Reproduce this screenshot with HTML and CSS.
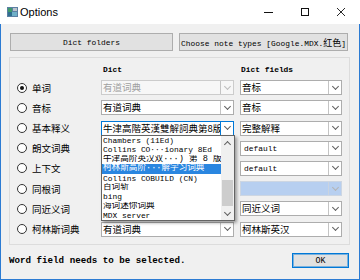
FILE: index.html
```html
<!DOCTYPE html>
<html lang="zh-CN">
<head>
  <meta charset="UTF-8">
  <title>Options</title>
  <link rel="stylesheet" href="styles.css">
</head>
<body>
  <div class="window">
    <!-- title bar -->
    <div class="titlebar">
      <svg class="app-icon" width="11" height="10" viewBox="0 0 11 10">
        <rect width="11" height="10" fill="#5b7fa3"/>
        <rect x="1" y="1" width="4" height="4" fill="#3f9a6a"/>
        <rect x="1" y="5" width="4" height="4" fill="#2f6f8f"/>
        <rect x="5" y="5" width="5" height="4" fill="#6fb0c8"/>
        <rect x="6" y="1" width="4" height="3" fill="#b9c3cc"/>
      </svg>
      <span class="title">Options</span>
      <div class="controls">
        <span class="ctl"><svg width="10" height="10" viewBox="0 0 10 10"><path d="M0 5.5h9" stroke="#111" fill="none"/></svg></span>
        <span class="ctl"><svg width="10" height="10" viewBox="0 0 10 10"><rect x="1.5" y="1.5" width="7" height="7" stroke="#111" fill="none"/></svg></span>
        <span class="ctl"><svg width="10" height="10" viewBox="0 0 10 10"><path d="M1 1l8 8M9 1l-8 8" stroke="#111" stroke-width="0.9" fill="none"/></svg></span>
      </div>
    </div>

    <div class="content">
      <div class="top-buttons">
        <button class="btn folders">Dict folders</button>
        <button class="btn notes">Choose note types [Google.MDX.<span class="cjk">红色</span>]</button>
      </div>

      <div class="group">
        <div class="grid">
          <span></span>
          <span class="head dict">Dict</span>
          <span class="head">Dict fields</span>

          <label class="radio"><span class="dot checked"></span>单词</label>
          <div class="combo disabled"><span class="value">有道词典</span><span class="arrow"></span></div>
          <div class="combo"><span class="value">音标</span><span class="arrow"></span></div>

          <label class="radio"><span class="dot"></span>音标</label>
          <div class="combo"><span class="value">有道词典</span><span class="arrow"></span></div>
          <div class="combo"><span class="value">音标</span><span class="arrow"></span></div>

          <label class="radio"><span class="dot"></span>基本释义</label>
          <div class="combo focus"><span class="value">牛津高階英漢雙解詞典第8版</span><span class="arrow"></span></div>
          <div class="combo"><span class="value">完整解释</span><span class="arrow"></span></div>

          <label class="radio"><span class="dot"></span>朗文词典</label>
          <div class="combo"><span class="value">有道词典</span><span class="arrow"></span></div>
          <div class="combo"><span class="value mono">default</span><span class="arrow"></span></div>

          <label class="radio"><span class="dot"></span>上下文</label>
          <div class="combo"><span class="value">有道词典</span><span class="arrow"></span></div>
          <div class="combo"><span class="value mono">default</span><span class="arrow"></span></div>

          <label class="radio"><span class="dot"></span>同根词</label>
          <div class="combo"><span class="value">有道词典</span><span class="arrow"></span></div>
          <div class="combo blank"><span class="value"></span><span class="arrow"></span></div>

          <label class="radio"><span class="dot"></span>同近义词</label>
          <div class="combo"><span class="value">有道词典</span><span class="arrow"></span></div>
          <div class="combo"><span class="value">同近义词</span><span class="arrow"></span></div>

          <label class="radio"><span class="dot"></span>柯林斯词典</label>
          <div class="combo"><span class="value">有道词典</span><span class="arrow"></span></div>
          <div class="combo"><span class="value">柯林斯英汉</span><span class="arrow"></span></div>
        </div>

        <!-- open list of the focused combo -->
        <div class="dropdown">
          <div class="items">
            <div class="item">Chambers (11Ed)</div>
            <div class="item">Collins CO···ionary 8Ed</div>
            <div class="item cjk">牛津高阶英汉双···) 第 8 版</div>
            <div class="item cjk selected">柯林斯高阶···解学习词典</div>
            <div class="item">Collins COBUILD (CN)</div>
            <div class="item cjk">百词斩</div>
            <div class="item">bing</div>
            <div class="item cjk">海词迷你词典</div>
            <div class="item">MDX server</div>
          </div>
          <div class="scrollbar">
            <span class="sb-btn up"></span>
            <div class="track"><div class="thumb"></div></div>
            <span class="sb-btn down"></span>
          </div>
        </div>
      </div>

      <div class="footer">
        <span class="status">Word field needs to be selected.</span>
        <button class="btn ok">OK</button>
      </div>
    </div>
  </div>
</body>
</html>
```

FILE: styles.css
```css
body {
  margin: 0;
  background: #fff;
}

.window {
  width: 360px;
  height: 280px;
  font-family: "Noto Sans CJK SC", sans-serif;
  color: #000;
}

.titlebar {
  height: 24px;
  display: flex;
  align-items: center;
  background: #fff;
}

.app-icon {
  margin-left: 7px;
}

.title {
  margin-left: 2px;
  font-family: "Liberation Sans", sans-serif;
  font-size: 11px;
  color: #000;
}

.controls {
  margin-left: auto;
  display: flex;
  margin-right: 1px;
}

.ctl {
  width: 36px;
  height: 24px;
  display: flex;
  align-items: center;
  justify-content: center;
}

.content {
  box-sizing: border-box;
  height: 256px;
  background: #f0f0f0;
  border: 1px solid #2b7bd3;
  border-top: none;
  padding: 9px 9px 0 8px;
}

.top-buttons {
  display: flex;
  gap: 6px;
  height: 18px;
  margin: 0 2px 0 1px;
}

.btn {
  font-family: "Liberation Mono", "Noto Sans CJK SC", monospace;
  font-size: 7.9px;
  color: #000;
  background: #e1e1e1;
  border: 1px solid #adadad;
  padding: 0;
  white-space: nowrap;
  overflow: hidden;
}

.btn .cjk {
  font-family: "Noto Sans CJK SC", sans-serif;
  font-size: 9px;
}

.folders {
  width: 163px;
}

.notes {
  flex: 1;
}

.group {
  position: relative;
  margin-top: 6px;
  border: 1px solid #dcdcdc;
  padding: 7px 7px 7.4px 7px;
}

.grid {
  display: grid;
  grid-template-columns: 78px 133px 102px;
  grid-template-rows: 10px repeat(8, 15px);
  column-gap: 6px;
  row-gap: 5.2px;
}

.head {
  font-family: "Liberation Mono", monospace;
  font-weight: bold;
  font-size: 7.9px;
  line-height: 10px;
  padding-left: 1px;
}

.head.dict {
  padding-left: 2px;
}

.radio {
  display: flex;
  align-items: center;
  gap: 5px;
  font-size: 9.5px;
  white-space: nowrap;
}

.dot {
  box-sizing: border-box;
  width: 10px;
  height: 10px;
  border: 1px solid #333;
  border-radius: 50%;
  background: #fff;
  display: flex;
  align-items: center;
  justify-content: center;
  flex-shrink: 0;
}

.dot.checked::after {
  content: "";
  width: 4px;
  height: 4px;
  border-radius: 50%;
  background: #111;
}

.combo {
  box-sizing: border-box;
  height: 15px;
  display: flex;
  border: 1px solid #adadad;
  background: #fff;
}

.combo .value {
  flex: 1;
  min-width: 0;
  font-size: 9.5px;
  line-height: 13px;
  padding-left: 1px;
  overflow: hidden;
  white-space: nowrap;
}

.combo .value.mono {
  font-family: "Liberation Mono", monospace;
  font-size: 7.9px;
  padding-left: 3px;
}

.combo .arrow {
  box-sizing: border-box;
  width: 13px;
  border-left: 1px solid #c4c4c4;
  display: flex;
  align-items: center;
  justify-content: center;
}

.combo .arrow::after,
.sb-btn::after {
  content: "";
  width: 4px;
  height: 4px;
  border-right: 1px solid #606060;
  border-bottom: 1px solid #606060;
  transform: rotate(45deg);
  margin-top: -3px;
}

.combo.disabled {
  border-color: #cccccc;
  background: #f7f7f7;
  color: #a0a0a0;
}

.combo.disabled .arrow::after {
  border-color: #bdbdbd;
}

.combo.focus {
  border-color: #0078d7;
}

.combo.focus .arrow {
  border: 1px solid #0078d7;
  margin: -1px -1px -1px 0;
  width: 14px;
}

.combo.blank {
  background: #b7cff0;
  border-color: #cdd6e2;
}

.combo.blank .arrow {
  border-left-color: #c9d3e0;
}

.combo.blank .arrow::after {
  border-color: #b4b4b4;
}

.dropdown {
  position: absolute;
  left: 91px;
  top: 77px;
  box-sizing: border-box;
  width: 134px;
  height: 86px;
  display: flex;
  background: #fff;
  border: 1px solid #646464;
  box-shadow: 2px 2px 3px rgba(0, 0, 0, 0.35);
}

.items {
  flex: 1;
  min-width: 0;
}

.item {
  height: 9.4px;
  line-height: 9.4px;
  padding-left: 1px;
  font-family: "Liberation Mono", monospace;
  font-size: 7.9px;
  white-space: nowrap;
  overflow: hidden;
}

.item.cjk {
  font-family: "Liberation Mono", "Noto Sans CJK SC", monospace;
  font-size: 8.6px;
}

.item.selected {
  background: #2a86e0;
  color: #fff;
}

.scrollbar {
  width: 13px;
  display: flex;
  flex-direction: column;
  background: #f0f0f0;
}

.sb-btn {
  height: 13px;
  display: flex;
  align-items: center;
  justify-content: center;
}

.sb-btn.up::after {
  transform: rotate(-135deg);
  margin-top: 3px;
}

.track {
  flex: 1;
}

.thumb {
  margin: 31px 1px 0;
  height: 26px;
  background: #cdcdcd;
}

.footer {
  display: flex;
  justify-content: space-between;
  align-items: center;
  padding-top: 8px;
  margin-right: 1px;
}

.status {
  font-family: "Liberation Mono", monospace;
  font-weight: bold;
  font-size: 9.2px;
}

.btn.ok {
  width: 57px;
  height: 15px;
  border-color: #0078d7;
  box-shadow: inset 0 0 0 1px rgba(0, 120, 215, 0.45);
  font-size: 8.3px;
}
```
